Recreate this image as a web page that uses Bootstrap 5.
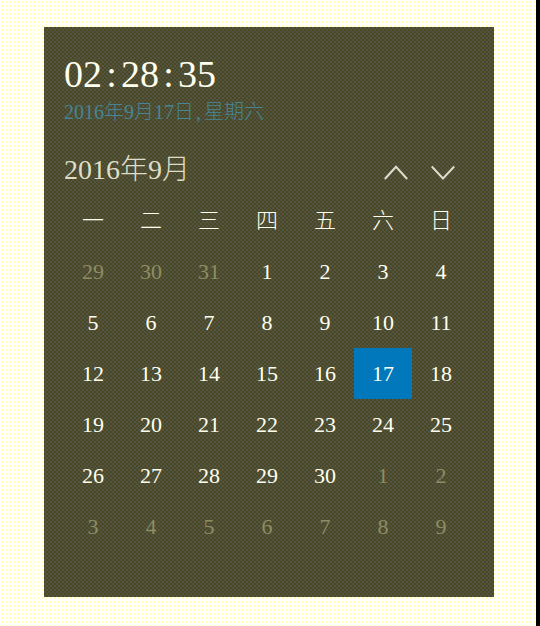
<!DOCTYPE html>
<html lang="zh-CN">
<head>
<meta charset="utf-8">
<meta name="viewport" content="width=device-width, initial-scale=1">
<title>日历</title>
<link href="https://cdn.jsdelivr.net/npm/bootstrap@5.3.0/dist/css/bootstrap.min.css" rel="stylesheet">
<style>
  body {
    height: 626px; overflow: hidden;
    font-family: "Liberation Serif", "Noto Sans CJK SC", serif;
    font-weight: 300;
    border-right: 4px solid #000;
    padding: 27px 0 0 44px;
    background: conic-gradient(at 1px 2px, transparent 75%, #ffffb4 0) 2px 1px / 4px 4px, #fffffb;
  }
  .clock-panel {
    width: 450px; height: 570px; padding: 25px 24px 0 20px; color: #fffff0;
    background: conic-gradient(#484826 25%, #555542 0 50%, #484826 0 75%, #53533e 0) 0 0 / 4px 4px;
  }
  .clock-time { font-size: 38px; line-height: 44px; height: 47px; }
  .half { display: inline-block; width: .5em; text-align: center; }
  .clock-date { font-size: 20px; line-height: 26px; height: 24px; color: #478496; }
  .comma { display: inline-block; width: .5em; padding-left: 2px; }
  .month-bar { height: 72px; padding: 30px 15px 0 0; }
  .month-name { font-size: 28px; line-height: 34px; color: #dedec8; }
  .arrows { gap: 23px; padding-top: 12px; }
  .days { display: grid; grid-template-columns: repeat(7, 58px); grid-auto-rows: 51px; font-size: 22px; line-height: 1; }
  .days > div { display: flex; align-items: center; justify-content: center; padding-top: 1px; }
  .days > .other { color: #8d8d63; }
  .days > .today { background: #0078bb; }
</style>
<script src="https://cdn.jsdelivr.net/npm/bootstrap@5.3.0/dist/js/bootstrap.bundle.min.js"></script>
</head>
<body>
<main class="clock-panel">
  <div class="clock-time text-nowrap">02<span class="half">:</span>28<span class="half">:</span>35</div>
  <div class="clock-date text-nowrap">2016年9月17日<span class="comma">,</span>星期六</div>
  <div class="month-bar d-flex justify-content-between align-items-start">
    <div class="month-name text-nowrap">2016年9月</div>
    <div class="arrows d-flex">
      <svg width="24" height="15" viewBox="0 0 24 15" fill="none" stroke="#deded0" stroke-width="2"><path d="M.8 14 12 1.8 23.2 14"/></svg>
      <svg width="24" height="15" viewBox="0 0 24 15" fill="none" stroke="#deded0" stroke-width="2"><path d="M.8 1.5 12 13.5 23.2 1.5"/></svg>
    </div>
  </div>
  <div class="days">
    <div>一</div><div>二</div><div>三</div><div>四</div><div>五</div><div>六</div><div>日</div>
    <div class="other">29</div><div class="other">30</div><div class="other">31</div><div>1</div><div>2</div><div>3</div><div>4</div>
    <div>5</div><div>6</div><div>7</div><div>8</div><div>9</div><div>10</div><div>11</div>
    <div>12</div><div>13</div><div>14</div><div>15</div><div>16</div><div class="today">17</div><div>18</div>
    <div>19</div><div>20</div><div>21</div><div>22</div><div>23</div><div>24</div><div>25</div>
    <div>26</div><div>27</div><div>28</div><div>29</div><div>30</div><div class="other">1</div><div class="other">2</div>
    <div class="other">3</div><div class="other">4</div><div class="other">5</div><div class="other">6</div><div class="other">7</div><div class="other">8</div><div class="other">9</div>
  </div>
</main>
</body>
</html>
